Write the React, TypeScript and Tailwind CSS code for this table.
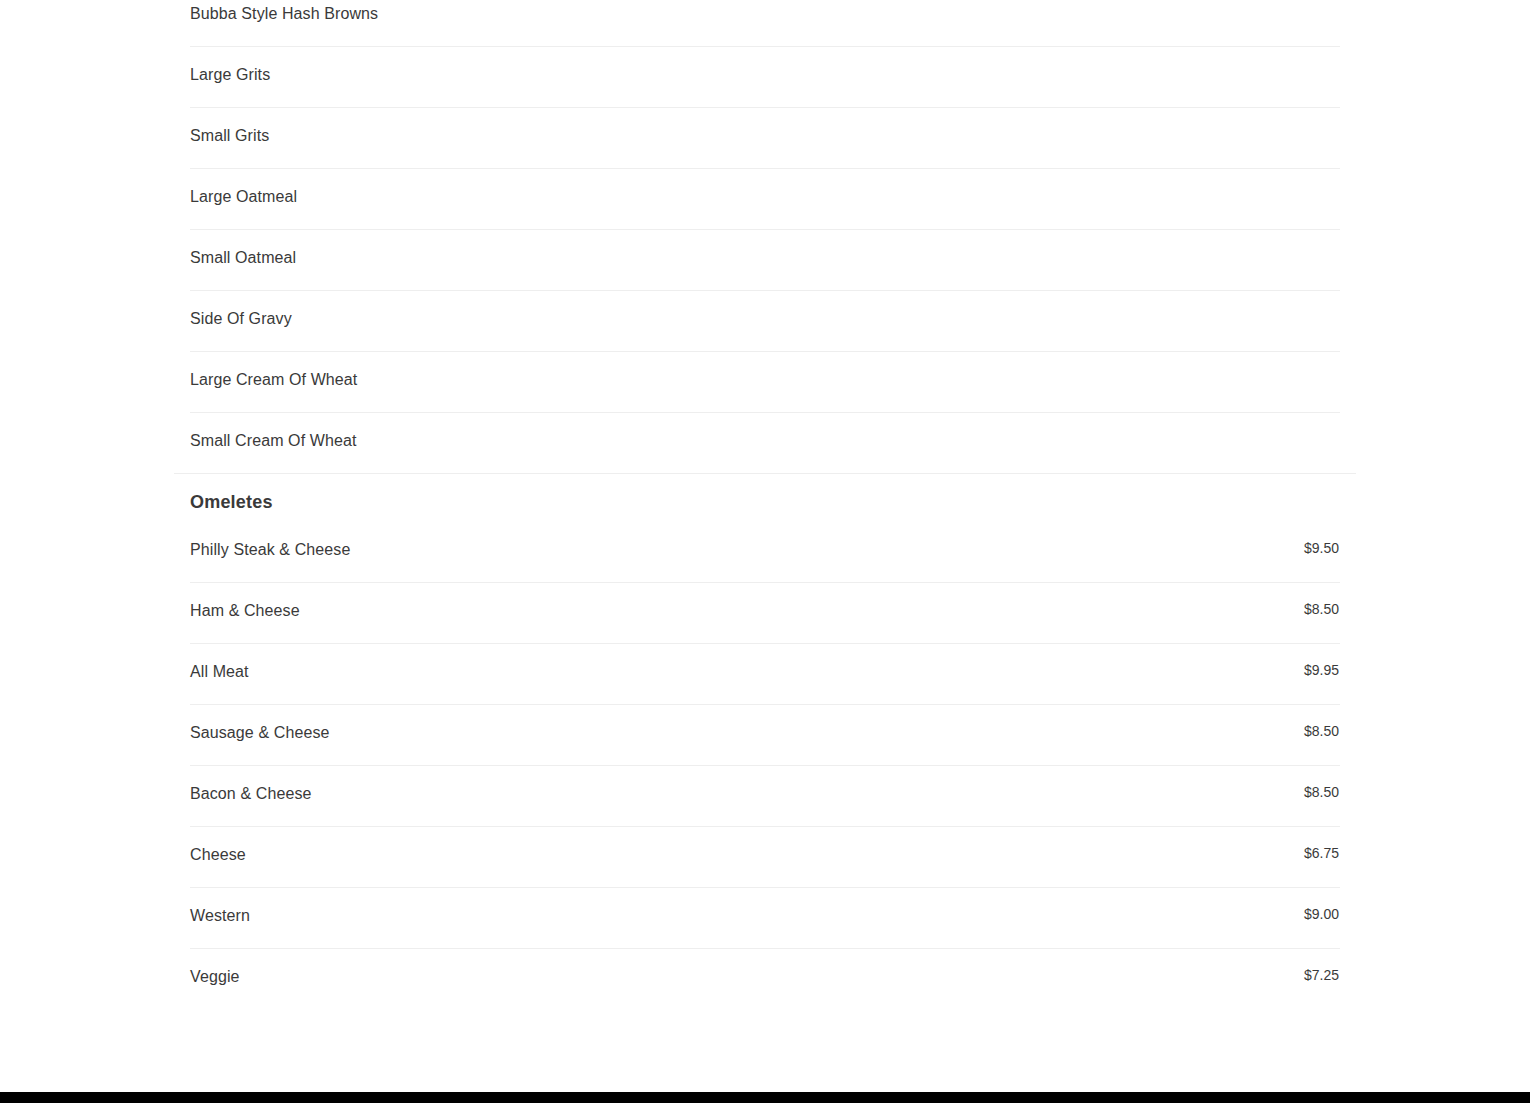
import React from "react";

type Item = { name: string; price?: string };

const sides: Item[] = [
  { name: "Bubba Style Hash Browns" },
  { name: "Large Grits" },
  { name: "Small Grits" },
  { name: "Large Oatmeal" },
  { name: "Small Oatmeal" },
  { name: "Side Of Gravy" },
  { name: "Large Cream Of Wheat" },
  { name: "Small Cream Of Wheat" },
];

const omeletes: Item[] = [
  { name: "Philly Steak & Cheese", price: "$9.50" },
  { name: "Ham & Cheese", price: "$8.50" },
  { name: "All Meat", price: "$9.95" },
  { name: "Sausage & Cheese", price: "$8.50" },
  { name: "Bacon & Cheese", price: "$8.50" },
  { name: "Cheese", price: "$6.75" },
  { name: "Western", price: "$9.00" },
  { name: "Veggie", price: "$7.25" },
];

const MenuRow = ({ item }: { item: Item }) => (
  <li className="flex items-start justify-between h-[61px] pt-[16px] border-b border-[#eeeeee] last:border-0 last:h-[60px]">
    <span className="text-[16px] leading-[24px] text-[#3a3a3a] tracking-[0.1px]">{item.name}</span>
    {item.price && (
      <span className="text-[14px] leading-[20px] text-[#3a3a3a] pr-[1px]">{item.price}</span>
    )}
  </li>
);

const App = () => {
  return (
    <div className="min-h-screen bg-white font-['Liberation_Sans',Arial,sans-serif]">
      <div className="w-[1182px] mx-auto -mt-[14px]">
        <section className="px-4 border-b border-[#eeeeee]">
          <ul>
            {sides.map((item) => (
              <MenuRow key={item.name} item={item} />
            ))}
          </ul>
        </section>
        <section className="px-4">
          <h2 className="pt-[16px] pb-[8px] text-[18px] leading-[24px] font-bold text-[#3a3a3a] tracking-[0.2px]">
            Omeletes
          </h2>
          <ul>
            {omeletes.map((item) => (
              <MenuRow key={item.name} item={item} />
            ))}
          </ul>
        </section>
      </div>
      <footer className="mt-[83px] h-[60px] bg-black" />
    </div>
  );
};

export default App;
